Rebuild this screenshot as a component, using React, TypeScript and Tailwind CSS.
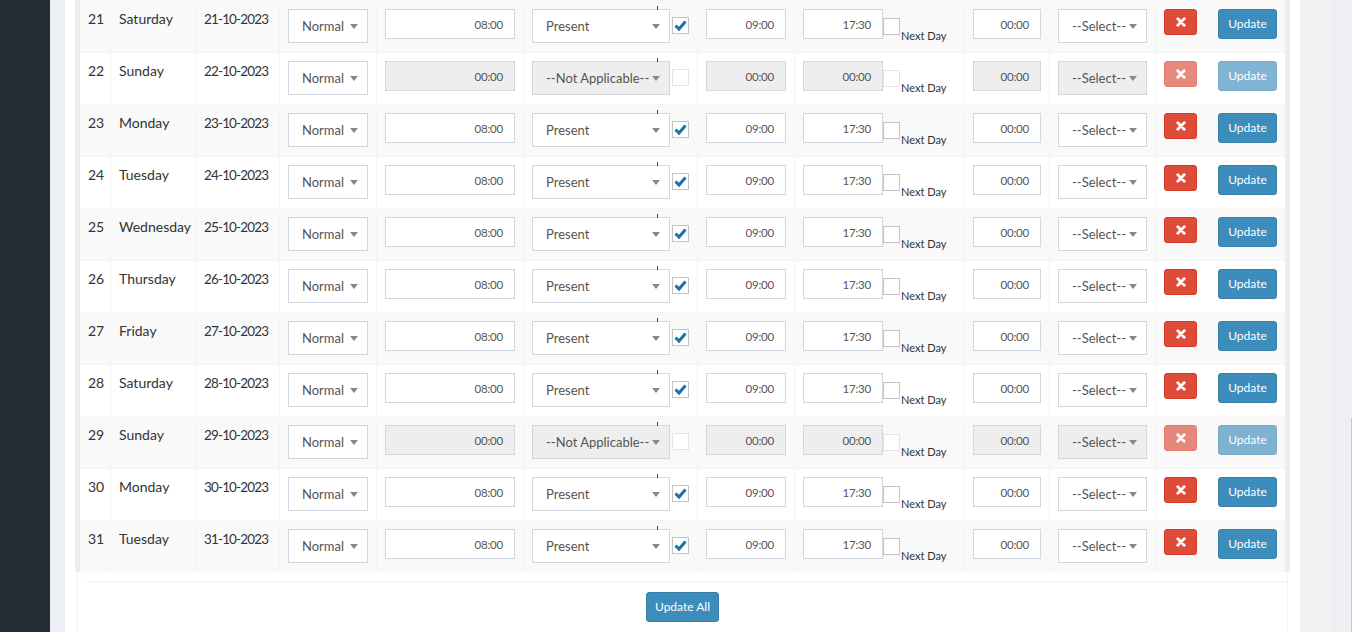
import React from 'react';

type Row = { n: number; day: string; date: string; off?: boolean };

const rows: Row[] = [
  { n: 21, day: 'Saturday', date: '21-10-2023' },
  { n: 22, day: 'Sunday', date: '22-10-2023', off: true },
  { n: 23, day: 'Monday', date: '23-10-2023' },
  { n: 24, day: 'Tuesday', date: '24-10-2023' },
  { n: 25, day: 'Wednesday', date: '25-10-2023' },
  { n: 26, day: 'Thursday', date: '26-10-2023' },
  { n: 27, day: 'Friday', date: '27-10-2023' },
  { n: 28, day: 'Saturday', date: '28-10-2023' },
  { n: 29, day: 'Sunday', date: '29-10-2023', off: true },
  { n: 30, day: 'Monday', date: '30-10-2023' },
  { n: 31, day: 'Tuesday', date: '31-10-2023' },
];

const Caret = () => (
  <svg width="8" height="5" viewBox="0 0 8 5" className="shrink-0">
    <path d="M0 0h8L4 5z" fill="#888" />
  </svg>
);

const FakeSelect = ({ label, width, off }: { label: string; width: string; off?: boolean }) => (
  <div
    className={`flex h-[34px] items-center justify-between border border-[#d2d6de] pl-[13px] pr-[9px] text-[13px] text-[#555] ${width} ${off ? 'bg-[#eee]' : 'bg-white'}`}
  >
    <span className="whitespace-nowrap">{label}</span>
    <Caret />
  </div>
);

const TimeBox = ({ value, width, off }: { value: string; width: string; off?: boolean }) => (
  <div
    className={`flex h-[30px] items-center justify-end border border-[#d2d6de] pt-px pr-[11px] text-[11.5px] tracking-[-0.2px] text-[#555] ${width} ${off ? 'bg-[#eee]' : 'bg-white'}`}
  >
    {value}
  </div>
);

const Check = ({ checked, off }: { checked?: boolean; off?: boolean }) => (
  <div
    className={`flex h-[17px] w-[17px] shrink-0 items-center justify-center border bg-white ${off ? 'border-[#e4e4e4]' : 'border-[#c4c4c4]'}`}
  >
    {checked && (
      <svg width="15" height="15" viewBox="0 0 15 15">
        <path d="M2.5 7.5 L6 11 L12.5 3.5" fill="none" stroke="#1d6fa5" strokeWidth="3" />
      </svg>
    )}
  </div>
);

const TableRow = ({ r, idx }: { r: Row; idx: number }) => (
  <div className={`flex h-[52px] border-t border-[#f4f4f4] ${idx % 2 === 0 ? 'bg-[#f9f9f9]' : 'bg-white'}`}>
    <div className="w-[30px] shrink-0 px-2 pt-2">{r.n}</div>
    <div className="w-[85px] shrink-0 border-l border-[#f4f4f4] px-2 pt-2">{r.day}</div>
    <div className="w-[84px] shrink-0 whitespace-nowrap border-l border-[#f4f4f4] px-2 pt-2 text-[13.5px] tracking-[-0.85px]">
      {r.date}
    </div>
    <div className="w-[97px] shrink-0 border-l border-[#f4f4f4] px-2 pt-2">
      <FakeSelect label="Normal" width="w-[80px]" />
    </div>
    <div className="w-[147px] shrink-0 border-l border-[#f4f4f4] px-2 pt-2">
      <TimeBox value={r.off ? '00:00' : '08:00'} width="w-[130px]" off={r.off} />
    </div>
    <div className="relative w-[174px] shrink-0 border-l border-[#f4f4f4] px-2 pt-2">
      <div className="absolute left-[133px] top-[5px] h-[4px] w-px bg-[#444]" />
      <div className="flex items-start">
        <FakeSelect label={r.off ? '--Not Applicable--' : 'Present'} width="w-[138px]" off={r.off} />
        <div className="ml-[2px] mt-2">
          <Check checked={!r.off} off={r.off} />
        </div>
      </div>
    </div>
    <div className="w-[97px] shrink-0 border-l border-[#f4f4f4] px-2 pt-2">
      <TimeBox value={r.off ? '00:00' : '09:00'} width="w-[80px]" off={r.off} />
    </div>
    <div className="w-[170px] shrink-0 border-l border-[#f4f4f4] px-2 pt-2">
      <div className="flex items-start">
        <TimeBox value={r.off ? '00:00' : '17:30'} width="w-[80px]" off={r.off} />
        <div className="mt-[9px]">
          <Check off={r.off} />
        </div>
        <span className="ml-px mt-[21px] whitespace-nowrap text-[11px] leading-[11px] text-[#333]">Next Day</span>
      </div>
    </div>
    <div className="w-[85px] shrink-0 border-l border-[#f4f4f4] px-2 pt-2">
      <TimeBox value="00:00" width="w-[68px]" off={r.off} />
    </div>
    <div className="w-[106px] shrink-0 border-l border-[#f4f4f4] px-2 pt-2">
      <FakeSelect label="--Select--" width="w-[89px]" off={r.off} />
    </div>
    <div className="w-[130px] shrink-0 border-l border-[#f4f4f4] px-2 pt-2">
      <div className={`flex items-start gap-[21px] ${r.off ? 'opacity-65' : ''}`}>
        <button className="flex h-[26px] w-[33px] items-center justify-center rounded-[3px] border border-[#d73925] bg-[#dd4b39]">
          <svg width="10" height="10" viewBox="0 0 10 10">
            <path d="M1.8 1.8 L8.2 8.2 M8.2 1.8 L1.8 8.2" stroke="#fff" strokeWidth="2.8" strokeLinecap="round" />
          </svg>
        </button>
        <button className="h-[30px] w-[59px] rounded-[3px] border border-[#367fa9] bg-[#3c8dbc] text-[12px] text-white">
          Update
        </button>
      </div>
    </div>
  </div>
);

export default function App() {
  return (
    <div className="flex h-[632px] w-full overflow-hidden font-['Lato',sans-serif] text-[14px] leading-[20px] text-[#333]">
      <aside className="w-[50px] shrink-0 bg-[#222d32]" />
      <main className="flex flex-1 bg-[#ecf0f5] pl-[15px]">
        <section className="w-[1235px] shrink-0 bg-white px-[12px]">
          <div className="flex h-full flex-col border-x border-[#f4f4f4]">
            <div className="mx-[-3px] border-x-[5px] border-[#ededed]">
              {rows.map((r, i) => (
                <TableRow key={r.n} r={r} idx={i} />
              ))}
            </div>
            <div className="ml-[8px] mt-[9px] h-px bg-[#f0f0f0]" />
            <div className="mt-[10px] flex justify-center">
              <button className="h-[30px] w-[73px] rounded-[3px] border border-[#367fa9] bg-[#3c8dbc] text-[12px] text-white">
                Update All
              </button>
            </div>
          </div>
        </section>
        <div className="w-[33px] shrink-0 bg-[#f1f1f1]" />
        <div className="flex flex-1 flex-col items-end">
          <div className="h-[418px]" />
          <div className="w-px flex-1 bg-[#c6c6c6]" />
        </div>
      </main>
    </div>
  );
}
